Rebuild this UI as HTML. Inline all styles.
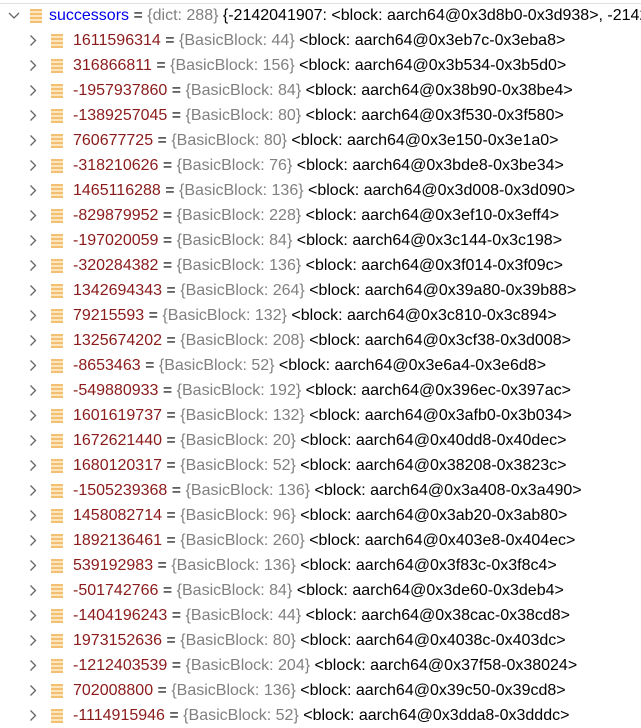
<!DOCTYPE html>
<html><head><meta charset="utf-8"><style>
body{margin:0;width:641px;height:726px;overflow:hidden;background:#fff;font-family:"Liberation Sans",sans-serif;font-size:16px;}
.top{position:absolute;left:0;top:3px;width:641px;height:1px;background:#e0e0e0}
.r{position:absolute;left:0;width:641px;overflow:hidden;height:25px;line-height:25px;white-space:nowrap;color:#000}
.ch{position:absolute;top:0;width:12px;height:25px}
.ic{position:absolute;top:6px;width:12px;height:14px;background:repeating-linear-gradient(to bottom,#f3c073 0 2px,#fde6bd 2px 4px)}
.t{position:absolute;top:0}
.k{color:#8b1a1a}.n{color:#0000ee}.g{color:#808080}
</style></head><body>
<div class="top"></div>
<div class="r" style="top:3px">
<svg class="ch" style="left:8px" viewBox="0 0 12 25"><path d="M1 10 L6 15 L11 10" fill="none" stroke="#666" stroke-width="1.3"/></svg>
<div class="ic" style="left:30px"></div>
<span class="t" style="left:49px"><span class="n">successors</span> = <span class="g">{dict: 288}</span> {-2142041907: &lt;block: aarch64@0x3d8b0-0x3d938&gt;, -2142041907</span>
</div>
<div id="rows"></div>
<script>
var d=[["1611596314",44,"0x3eb7c-0x3eba8"],["316866811",156,"0x3b534-0x3b5d0"],["-1957937860",84,"0x38b90-0x38be4"],["-1389257045",80,"0x3f530-0x3f580"],["760677725",80,"0x3e150-0x3e1a0"],["-318210626",76,"0x3bde8-0x3be34"],["1465116288",136,"0x3d008-0x3d090"],["-829879952",228,"0x3ef10-0x3eff4"],["-197020059",84,"0x3c144-0x3c198"],["-320284382",136,"0x3f014-0x3f09c"],["1342694343",264,"0x39a80-0x39b88"],["79215593",132,"0x3c810-0x3c894"],["1325674202",208,"0x3cf38-0x3d008"],["-8653463",52,"0x3e6a4-0x3e6d8"],["-549880933",192,"0x396ec-0x397ac"],["1601619737",132,"0x3afb0-0x3b034"],["1672621440",20,"0x40dd8-0x40dec"],["1680120317",52,"0x38208-0x3823c"],["-1505239368",136,"0x3a408-0x3a490"],["1458082714",96,"0x3ab20-0x3ab80"],["1892136461",260,"0x403e8-0x404ec"],["539192983",136,"0x3f83c-0x3f8c4"],["-501742766",84,"0x3de60-0x3deb4"],["-1404196243",44,"0x38cac-0x38cd8"],["1973152636",80,"0x4038c-0x403dc"],["-1212403539",204,"0x37f58-0x38024"],["702008800",136,"0x39c50-0x39cd8"],["-1114915946",52,"0x3dda8-0x3dddc"]];
var h="";d.forEach(function(x,i){h+='<div class="r" style="top:'+(28+25*i)+'px"><svg class="ch" style="left:27px" viewBox="0 0 12 25"><path d="M3.5 7.5 L8.5 12.5 L3.5 17.5" fill="none" stroke="#666" stroke-width="1.3"/></svg><div class="ic" style="left:51px"></div><span class="t" style="left:73px"><span class="k">'+x[0]+'</span> = <span class="g">{BasicBlock: '+x[1]+'}</span> &lt;block: aarch64@'+x[2]+'&gt;</span></div>';});
document.getElementById("rows").innerHTML=h;
</script>
</body></html>
